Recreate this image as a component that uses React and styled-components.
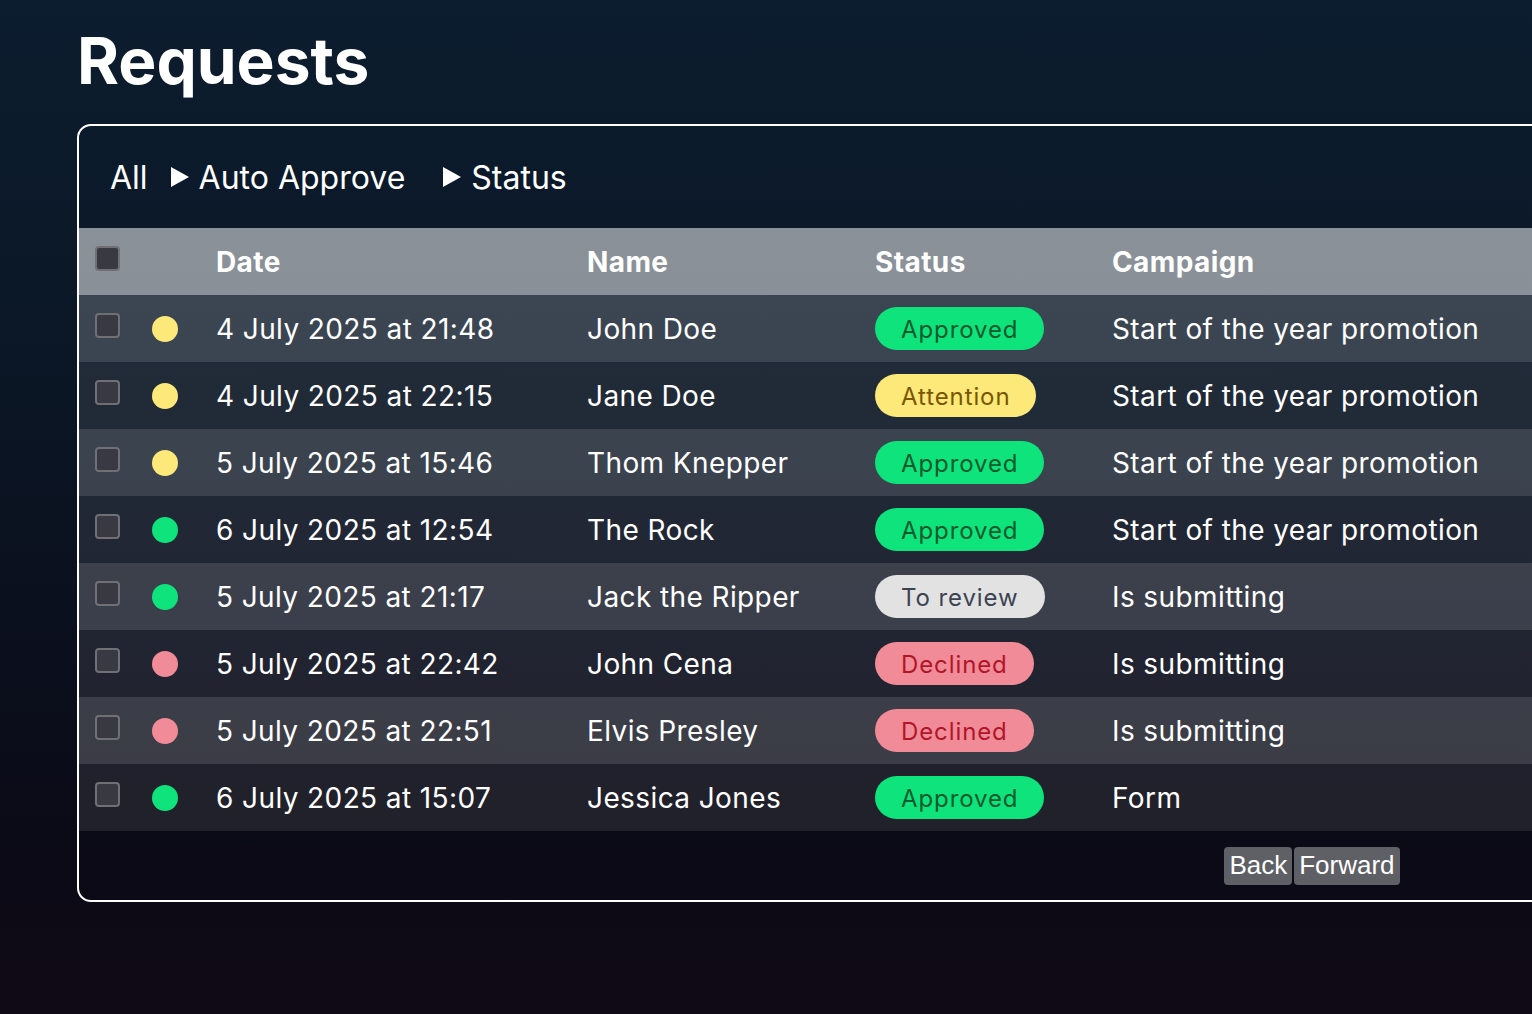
import React from 'react'
import styled, { createGlobalStyle } from 'styled-components'

const GlobalStyle = createGlobalStyle`
  html, body {
    margin: 0;
    padding: 0;
    overflow: hidden;
  }
  body {
    min-height: 100vh;
    background: linear-gradient(180deg, #0c1d2f 0%, #0b1726 35%, #0b101e 60%, #0b0a16 85%, #100a16 100%);
    font-family: Inter, "Noto Sans", sans-serif;
    color: #fff;
  }
`

const Page = styled.div`
  height: 1014px;
  padding: 22px 0 0 77px;
  box-sizing: border-box;
`

const Title = styled.h1`
  margin: 0;
  font-size: 64px;
  line-height: 77px;
  font-weight: 700;
`

const Card = styled.div`
  margin-top: 25px;
  width: 2466px;
  border: 2px solid #fff;
  border-radius: 14px;
  overflow: hidden;
`

const Filters = styled.div`
  height: 102px;
  display: flex;
  align-items: center;
  padding-left: 31px;
  font-size: 32px;
`

const Filter = styled.span`
  display: flex;
  align-items: center;
  margin-right: ${(p) => p.$gap}px;
`

const Arrow = styled.span`
  width: 0;
  height: 0;
  border-top: 10px solid transparent;
  border-bottom: 10px solid transparent;
  border-left: 18px solid #fff;
  margin-right: 10px;
`

const Row = styled.div`
  display: grid;
  grid-template-columns: 57px 64px 371px 288px 237px 1fr;
  align-items: center;
  height: 67px;
  font-size: 28px;
  letter-spacing: 0.4px;
  font-weight: ${(p) => (p.$head ? 700 : 400)};
  background: ${(p) =>
    p.$head ? 'rgba(255,255,255,0.52)' : p.$odd ? 'rgba(255,255,255,0.2)' : 'rgba(255,255,255,0.09)'};
`

const Cell = styled.div`
  padding-left: 16px;
  white-space: nowrap;
  display: flex;
  align-items: center;
`

const Check = styled.span`
  width: 25px;
  height: 25px;
  box-sizing: border-box;
  border: 2px solid #707074;
  border-radius: 4px;
  background: #393943;
  margin-top: -6px;
`

const Dot = styled.span`
  width: 26px;
  height: 26px;
  border-radius: 50%;
  background: ${(p) => p.$color};
`

const badges = {
  Approved: { bg: '#0ee37c', fg: '#0a5a2c' },
  Attention: { bg: '#fde87a', fg: '#7a5600' },
  'To review': { bg: '#e2e2e2', fg: '#3b4352' },
  Declined: { bg: '#f28b98', fg: '#b0162a' },
}

const Badge = styled.span`
  display: inline-flex;
  align-items: center;
  height: 43px;
  padding: 1px 26px 0;
  box-sizing: border-box;
  border-radius: 22px;
  font-size: 24px;
  letter-spacing: 0.9px;
  background: ${(p) => badges[p.$status].bg};
  color: ${(p) => badges[p.$status].fg};
`

const Footer = styled.div`
  height: 69px;
  display: flex;
  justify-content: center;
  align-items: center;
  gap: 2px;
`

const PageButton = styled.button`
  height: 38px;
  padding: 0 5px;
  border: none;
  border-radius: 4px;
  background: #5f5f66;
  color: #fff;
  font-family: "Liberation Sans", Arial, sans-serif;
  font-size: 26px;
`

const dotColors = {
  yellow: '#fde87a',
  green: '#0ee37c',
  pink: '#f28b98',
}

const rows = [
  { dot: 'yellow', date: '4 July 2025 at 21:48', name: 'John Doe', status: 'Approved', campaign: 'Start of the year promotion' },
  { dot: 'yellow', date: '4 July 2025 at 22:15', name: 'Jane Doe', status: 'Attention', campaign: 'Start of the year promotion' },
  { dot: 'yellow', date: '5 July 2025 at 15:46', name: 'Thom Knepper', status: 'Approved', campaign: 'Start of the year promotion' },
  { dot: 'green', date: '6 July 2025 at 12:54', name: 'The Rock', status: 'Approved', campaign: 'Start of the year promotion' },
  { dot: 'green', date: '5 July 2025 at 21:17', name: 'Jack the Ripper', status: 'To review', campaign: 'Is submitting' },
  { dot: 'pink', date: '5 July 2025 at 22:42', name: 'John Cena', status: 'Declined', campaign: 'Is submitting' },
  { dot: 'pink', date: '5 July 2025 at 22:51', name: 'Elvis Presley', status: 'Declined', campaign: 'Is submitting' },
  { dot: 'green', date: '6 July 2025 at 15:07', name: 'Jessica Jones', status: 'Approved', campaign: 'Form' },
]

export default function App() {
  return (
    <Page>
      <GlobalStyle />
      <Title>Requests</Title>
      <Card>
        <Filters>
          <Filter $gap={23}>All</Filter>
          <Filter $gap={38}>
            <Arrow />
            Auto Approve
          </Filter>
          <Filter $gap={0}>
            <Arrow />
            Status
          </Filter>
        </Filters>
        <Row $head>
          <Cell>
            <Check />
          </Cell>
          <Cell />
          <Cell>Date</Cell>
          <Cell>Name</Cell>
          <Cell>Status</Cell>
          <Cell>Campaign</Cell>
        </Row>
        {rows.map((r, i) => (
          <Row key={i} $odd={i % 2 === 0}>
            <Cell>
              <Check />
            </Cell>
            <Cell>
              <Dot $color={dotColors[r.dot]} />
            </Cell>
            <Cell>{r.date}</Cell>
            <Cell>{r.name}</Cell>
            <Cell>
              <Badge $status={r.status}>{r.status}</Badge>
            </Cell>
            <Cell>{r.campaign}</Cell>
          </Row>
        ))}
        <Footer>
          <PageButton>Back</PageButton>
          <PageButton>Forward</PageButton>
        </Footer>
      </Card>
    </Page>
  )
}
